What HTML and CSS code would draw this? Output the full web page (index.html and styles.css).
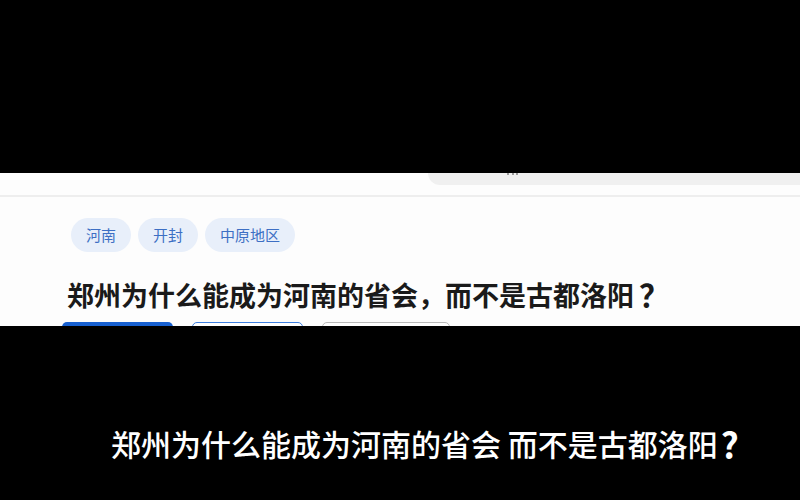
FILE: index.html
```html
<!DOCTYPE html>
<html lang="zh">
<head>
<meta charset="utf-8">
<title>郑州为什么能成为河南的省会</title>
<link rel="stylesheet" href="styles.css">
</head>
<body>
<div class="frame">
  <div class="bar-top"></div>
  <div class="panel">
    <div class="topbar"><div class="topbar-fill"><span class="dots"></span></div></div>
    <div class="divider"></div>
    <div class="tags">
      <span class="tag">河南</span>
      <span class="tag">开封</span>
      <span class="tag">中原地区</span>
    </div>
    <h1 class="title">郑州为什么能成为河南的省会，而不是古都洛阳<span class="qm">？</span></h1>
    <div class="actions">
      <span class="btn btn-primary"></span>
      <span class="btn btn-outline"></span>
      <span class="btn btn-gray"></span>
    </div>
  </div>
  <div class="bar-bottom">
    <p class="subtitle">郑州为什么能成为河南的省会 而不是古都洛阳<span class="sq">?</span></p>
  </div>
</div>
</body>
</html>
```

FILE: styles.css
```css
html, body {
  margin: 0;
  padding: 0;
  background: #000;
}
.frame {
  width: 800px;
  height: 500px;
  overflow: hidden;
  font-family: "Noto Sans CJK SC", "Noto Sans", sans-serif;
}
.bar-top {
  height: 173px;
  background: #000;
}
.panel {
  height: 153px;
  background: #fdfdfd;
  overflow: hidden;
}
.topbar {
  height: 12px;
  display: flex;
  justify-content: flex-end;
}
.topbar-fill {
  width: 372px;
  height: 12px;
  background: #f0f0f0;
  border-bottom-left-radius: 14px;
  position: relative;
}
.dots {
  position: absolute;
  left: 79px;
  top: 0;
  width: 11px;
  height: 0;
  border-top: 2px dotted #9a9a9a;
}
.divider {
  margin-top: 10px;
  height: 2px;
  background: #eeeeee;
}
.tags {
  margin-top: 21px;
  padding-left: 71px;
  display: flex;
  gap: 7px;
}
.tag {
  height: 34px;
  line-height: 34px;
  padding: 0 15px;
  border-radius: 17px;
  background: #e8effa;
  color: #3d6fc4;
  font-size: 15px;
}
.title {
  margin: 25px 0 0 0;
  padding-left: 67px;
  font-size: 27px;
  line-height: 35px;
  font-weight: 700;
  color: #1a1a1a;
  white-space: nowrap;
}
.qm {
  display: inline-block;
  padding-left: 5px;
  font-size: 31px;
  line-height: 1;
  vertical-align: -1px;
}
.actions {
  margin-top: 10px;
  padding-left: 62px;
  display: flex;
  gap: 19px;
}
.btn {
  height: 30px;
  border-radius: 5px;
  box-sizing: border-box;
}
.btn-primary {
  width: 111px;
  background: #1760d0;
}
.btn-outline {
  width: 111px;
  border: 1px solid #3d7fe0;
  background: #fff;
}
.btn-gray {
  width: 128px;
  border: 1px solid #b9b9b9;
  background: #fff;
}
.bar-bottom {
  height: 174px;
  background: #000;
  overflow: hidden;
}
.subtitle {
  margin: 97px 0 0 0;
  padding-left: 111px;
  font-size: 30px;
  line-height: 40px;
  font-weight: 500;
  color: #fff;
  white-space: nowrap;
  text-shadow: 0 0 2px #000;
}
.sq {
  font-size: 35px;
  font-weight: 700;
  line-height: 1;
  margin-left: 3px;
  vertical-align: -3px;
}
```
